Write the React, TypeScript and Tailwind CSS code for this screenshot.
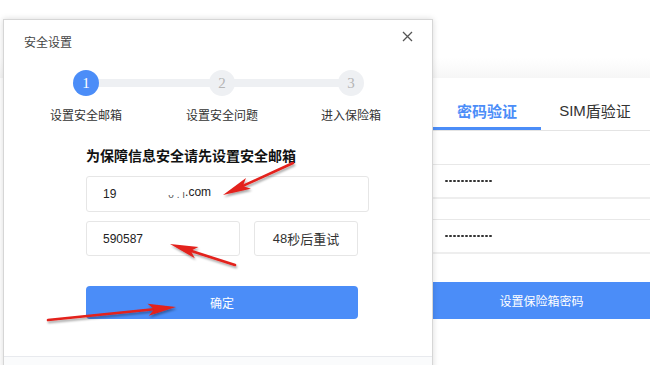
import React from 'react';

const cjk = { fontFamily: '"Noto Sans CJK SC", "Liberation Sans", sans-serif' };
const latin = { fontFamily: '"Liberation Sans", "Noto Sans CJK SC", sans-serif' };

type Arrow = { x1: number; y1: number; x2: number; y2: number };

const arrows: Arrow[] = [
  { x1: 293, y1: 163, x2: 223, y2: 195 },
  { x1: 235, y1: 265, x2: 170, y2: 244 },
  { x1: 48, y1: 320, x2: 176, y2: 307 },
];

function ArrowHead({ x1, y1, x2, y2 }: Arrow) {
  const dx = x1 - x2;
  const dy = y1 - y2;
  const len = Math.hypot(dx, dy);
  const ux = dx / len;
  const uy = dy / len;
  const px = -uy;
  const py = ux;
  const L = 28;
  const w = 6;
  const pts = [
    [x2, y2],
    [x2 + ux * L + px * w, y2 + uy * L + py * w],
    [x2 + ux * L * 0.78, y2 + uy * L * 0.78],
    [x2 + ux * L - px * w, y2 + uy * L - py * w],
  ]
    .map((p) => p.join(','))
    .join(' ');
  return (
    <g>
      <line x1={x1} y1={y1} x2={x2 + ux * 20} y2={y2 + uy * 20} stroke="#e3201b" strokeWidth={2.6} strokeLinecap="round" />
      <polygon points={pts} fill="#e3201b" />
    </g>
  );
}

function Step({ n, label, active }: { n: number; label: string; active?: boolean }) {
  return (
    <div className="flex flex-col items-center">
      <div
        className={
          active
            ? 'relative z-10 flex h-[26px] w-[26px] items-center justify-center rounded-full bg-[#4b8df8] text-[15px] text-white'
            : 'relative z-10 flex h-[26px] w-[26px] items-center justify-center rounded-full bg-[#eef0f3] text-[15px] text-[#b5b5b5]'
        }
        style={{ fontFamily: '"Liberation Serif", serif' }}
      >
        {n}
      </div>
      <div className="mt-[10px] text-[12px] leading-[18px] text-[#333]" style={cjk}>
        {label}
      </div>
    </div>
  );
}

function Dots() {
  return (
    <div className="flex gap-[1.5px]">
      {Array.from({ length: 12 }).map((_, i) => (
        <span key={i} className="h-[2.5px] w-[2.5px] rounded-full bg-[#333]" />
      ))}
    </div>
  );
}

export default function App() {
  return (
    <div className="relative h-[365px] w-[650px] overflow-hidden bg-white" style={cjk}>
      {/* page behind the dialog */}
      <div className="flex h-full flex-col">
        <div className="h-[58px] bg-white" />
        <div className="h-[20px] bg-gradient-to-b from-white to-[#f6f6f6]" />
        <div className="ml-[433px] flex flex-col">
          <div className="flex h-[53px] border-b border-[#e4e4e4]">
            <div className="flex w-[108px] items-center justify-center border-b-[3px] border-[#4b8df8] pt-[17px] text-[15px] font-bold text-[#4b8df8]">
              密码验证
            </div>
            <div className="flex w-[108px] items-center justify-center pt-[14px] text-[15px] text-[#333]">
              <span style={latin}>SIM</span>盾验证
            </div>
          </div>
          <div className="h-[34px] border-b border-[#e8e8e8]" />
          <div className="flex h-[34px] items-center border-b-2 border-[#eeeeee] pl-[12px]">
            <Dots />
          </div>
          <div className="h-[21px] border-b border-[#e8e8e8]" />
          <div className="flex h-[34px] items-center border-b-2 border-[#eeeeee] pl-[12px]">
            <Dots />
          </div>
          <div className="h-[28px]" />
          <div className="flex h-[37px] items-center justify-center bg-[#4b8df8] text-[12px] text-white">
            设置保险箱密码
          </div>
        </div>
      </div>

      {/* dialog */}
      <div className="absolute left-[3px] top-[19px] flex h-[360px] w-[430px] flex-col border border-[#d6d6d6] bg-white shadow-[0_0_6px_rgba(0,0,0,0.15)]">
        <div className="flex h-[40px] items-center justify-between pl-[20px] pr-[19px] pt-[4px]">
          <span className="text-[12px] text-[#444]">安全设置</span>
          <svg width="11" height="11" viewBox="0 0 11 11" className="-mt-[11px]">
            <path d="M1 1L10 10M10 1L1 10" stroke="#555" strokeWidth="1.3" />
          </svg>
        </div>

        {/* steps */}
        <div className="relative mt-[10px] ml-[14px] flex">
          <div className="absolute left-[68px] top-[9px] h-[8px] w-[265px] bg-[#eef0f3]" />
          <div className="flex w-[136px] justify-center">
            <Step n={1} label="设置安全邮箱" active />
          </div>
          <div className="flex w-[136px] justify-center">
            <Step n={2} label="设置安全问题" />
          </div>
          <div className="flex w-[122px] justify-center">
            <Step n={3} label="进入保险箱" />
          </div>
        </div>

        {/* form */}
        <div className="ml-[82px] mt-[21px] flex w-[283px] flex-col">
          <div className="text-[14px] font-bold leading-[20px] text-[#111]">为保障信息安全请先设置安全邮箱</div>
          <div className="mt-[11px] flex h-[36px] items-center rounded-[3px] border border-[#e6e6e6] pl-[16px] text-[12px] text-[#222]" style={latin}>
            <span>19</span>
            <span className="ml-[52px] text-[10px] text-[#555]">ᴗ . ı</span>
            <span className="-mt-[4px]">.com</span>
          </div>
          <div className="mt-[9px] flex gap-[14px]">
            <div className="flex h-[35px] w-[154px] items-center rounded-[3px] border border-[#e6e6e6] pl-[16px] text-[12px] text-[#222]" style={latin}>
              590587
            </div>
            <div className="flex h-[35px] w-[104px] items-center justify-center rounded-[3px] border border-[#e6e6e6] text-[13px] text-[#333]">
              <span style={latin}>48</span>秒后重试
            </div>
          </div>
          <div className="mt-[30px] flex h-[33px] w-[272px] items-center justify-center rounded-[4px] bg-[#4b8df8] text-[12px] text-white">
            确定
          </div>
        </div>

        <div className="flex-1" />
        <div className="h-[22px] border-t border-[#e8eaee] bg-[#fafbfc]" />
      </div>

      {/* red annotation arrows */}
      <svg className="pointer-events-none absolute left-0 top-0" width="650" height="365">
        <defs>
          <filter id="sh" x="-20%" y="-20%" width="140%" height="140%">
            <feDropShadow dx="1" dy="2" stdDeviation="1.2" floodColor="#000" floodOpacity="0.35" />
          </filter>
        </defs>
        <g filter="url(#sh)">
          {arrows.map((a, i) => (
            <ArrowHead key={i} {...a} />
          ))}
        </g>
      </svg>
    </div>
  );
}
